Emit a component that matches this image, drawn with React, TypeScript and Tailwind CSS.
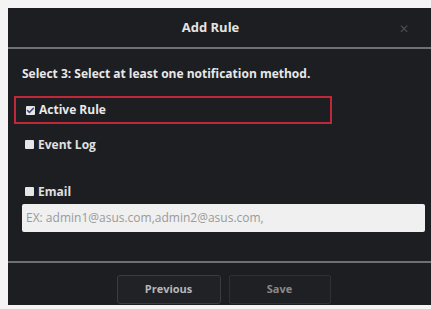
import { Check } from "lucide-react";

function Box({ checked }: { checked?: boolean }) {
  return (
    <span className="w-[9px] h-[9px] bg-[#e6e6e6] flex items-center justify-center rounded-[1px]">
      {checked && <Check className="w-[9px] h-[9px] text-[#3a4a7a]" strokeWidth={4} />}
    </span>
  );
}

export default function App() {
  return (
    <div className="w-[431px] h-[309px] bg-[#f4f4f4] pl-[8px] pt-[8px] overflow-hidden" style={{ fontFamily: "'Open Sans', 'Liberation Sans', sans-serif" }}>
      <div className="w-[423px] h-[297px] bg-[#1c1e22] flex flex-col">
        <div className="h-[41px] relative flex items-center justify-center border-b-[2px] border-[#6e7073] pr-[18px]">
          <span className="text-[13px] font-bold text-[#e4e4e4]">Add Rule</span>
          <span className="absolute right-[22px] top-[15px] text-[12px] text-[#4a4c50] leading-none">✕</span>
        </div>
        <div className="flex-1 flex flex-col pt-[19px]">
          <div className="pl-[14px] text-[12px] font-bold text-[#e8e8e8] leading-none">
            Select 3: Select at least one notification method.
          </div>
          <div className="mt-[16px] ml-[6px] w-[318px] h-[28px] border-[2px] border-[#c0283a] flex items-center gap-[4px] pl-[10px]">
            <Box checked />
            <span className="text-[12px] font-bold text-[#e8e8e8]">Active Rule</span>
          </div>
          <div className="mt-[12px] ml-[17px] flex items-center gap-[4px] h-[17px]">
            <Box />
            <span className="text-[12px] font-bold text-[#e0e0e0]">Event Log</span>
          </div>
          <div className="mt-[30px] ml-[17px] flex items-center gap-[4px] h-[17px]">
            <Box />
            <span className="text-[12px] font-bold text-[#e0e0e0]">Email</span>
          </div>
          <div className="mt-[4px] ml-[14px] w-[403px] h-[28px] bg-[#f0f0f0] rounded-[2px] flex items-center px-[4px]">
            <span className="text-[12px] text-[#9a9a9a]">EX: admin1@asus.com,admin2@asus.com,</span>
          </div>
        </div>
        <div className="h-[44px] border-t-[2px] border-[#6e7073] flex items-start justify-center gap-[8px] pt-[12px] pl-[8px]">
          <button className="w-[104px] h-[29px] rounded-[3px] border border-[#3a3c40] bg-[#202226] text-[11px] font-bold text-[#b8b8b8]">
            Previous
          </button>
          <button className="w-[102px] h-[29px] rounded-[2px] border border-[#2e3034] bg-[#1e2024] text-[11px] font-bold text-[#8a8a8a]">
            Save
          </button>
        </div>
      </div>
    </div>
  );
}
